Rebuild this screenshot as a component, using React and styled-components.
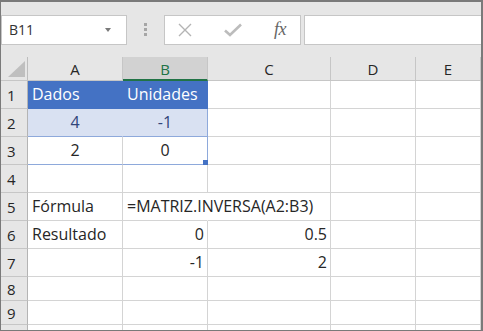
import React from 'react'
import styled, { createGlobalStyle } from 'styled-components'

const Global = createGlobalStyle`
    html, body { margin: 0; padding: 0; background: #fff; }
`

const Frame = styled.div`
    width: 483px;
    height: 331px;
    box-sizing: border-box;
    border-style: solid;
    border-color: #7a7a7a;
    border-width: 2px 2px 1px 1px;
    background: #e6e6e6;
    display: flex;
    flex-direction: column;
    overflow: hidden;
    font-family: "Open Sans", "Noto Sans", sans-serif;
    color: #262626;
`

const Toolbar = styled.div`
    height: 55px;
    flex-shrink: 0;
    display: flex;
    align-items: center;
`

const Box = styled.div`
    height: 30px;
    box-sizing: border-box;
    border: 1px solid #c6c6c6;
    background: #fff;
    display: flex;
    align-items: center;
`

const NameBox = styled(Box)`
    width: 126px;
    justify-content: space-between;
    padding: 0 15px 0 7px;
    font-size: 14px;
    color: #333;
`

const Caret = styled.span`
    width: 0;
    height: 0;
    border-left: 3.5px solid transparent;
    border-right: 3.5px solid transparent;
    border-top: 4px solid #7a7a7a;
`

const Grip = styled.div`
    width: 37px;
    display: flex;
    flex-direction: column;
    align-items: center;
    gap: 2px;
    & > span {
        width: 3px;
        height: 3px;
        background: #a6a6a6;
    }
`

const FxBox = styled(Box)`
    width: 137px;
    padding: 0 14px 0 13px;
    justify-content: space-between;
`

const Fx = styled.span`
    font-family: "Liberation Serif", serif;
    font-style: italic;
    font-size: 18px;
    color: #666;
    letter-spacing: -0.5px;
`

const FormulaInput = styled(Box)`
    flex: 1;
    margin-left: 3px;
    border-right: none;
`

const Grid = styled.div`
    flex: 1;
    display: grid;
    grid-template-columns: 27px 95px 85px 123px 85px 1fr;
    grid-template-rows: 24px repeat(7, 28px) repeat(3, 24px);
    background: #fff;
    overflow: hidden;
`

const Corner = styled.div`
    background: #e6e6e6;
    box-sizing: border-box;
    border-right: 1px solid #bdbdbd;
    border-bottom: 1px solid #c6c6c6;
    display: flex;
    align-items: flex-end;
    justify-content: flex-end;
    padding: 0 2px 3px 0;
`

const ColHead = styled.div`
    background: ${p => p.$active ? '#d2d2d2' : '#e6e6e6'};
    color: ${p => p.$active ? '#217346' : '#262626'};
    box-sizing: border-box;
    border-right: 1px solid #c6c6c6;
    border-bottom: ${p => p.$active ? '2px solid #217346' : '1px solid #c6c6c6'};
    font-size: 15px;
    display: flex;
    align-items: center;
    justify-content: center;
    padding-top: 1px;
`

const RowHead = styled.div`
    background: #e6e6e6;
    box-sizing: border-box;
    border-right: 1px solid #b4b4b4;
    border-bottom: 1px solid #c6c6c6;
    font-size: 15px;
    display: flex;
    align-items: center;
    padding-left: 6px;
`

const tones = {
    plain: { bg: 'transparent', right: '#d4d4d4', bottom: '#d4d4d4', color: '#262626' },
    head: { bg: '#4472c4', right: '#4472c4', bottom: '#4472c4', color: '#fff' },
    band: { bg: '#d9e1f2', right: '#d9e1f2', bottom: '#8ea9db', color: '#31457a' },
    body: { bg: '#fff', right: '#d4d4d4', bottom: '#8ea9db', color: '#262626' },
}

const Cell = styled.div`
    position: relative;
    box-sizing: border-box;
    background: ${p => tones[p.$tone].bg};
    color: ${p => tones[p.$tone].color};
    border-bottom: 1px solid ${p => tones[p.$tone].bottom};
    border-right: 1px solid ${p => p.$spill ? 'transparent' : p.$edge ? (p.$tone === 'head' ? '#4472c4' : '#8ea9db') : tones[p.$tone].right};
    font-size: 16px;
    line-height: ${p => p.$short ? '23px' : '27px'};
    white-space: nowrap;
    text-align: ${p => p.$align || 'left'};
    padding: ${p => p.$align === 'right' ? '0 3px 0 4px' : '0 4px 0 4px'};
    overflow: visible;
    z-index: ${p => p.$spill ? 1 : 0};
    ${p => p.$handle && `
        &::after {
            content: '';
            position: absolute;
            right: -1px;
            bottom: -1px;
            width: 5px;
            height: 5px;
            background: #4472c4;
        }
    `}
`

const columns = ['A', 'B', 'C', 'D', 'E']

const rows = [
    [{ t: 'Dados', tone: 'head' }, { t: 'Unidades', tone: 'head', edge: true }],
    [{ t: '4', tone: 'band', align: 'center' }, { t: '-1', tone: 'band', align: 'center', edge: true }],
    [{ t: '2', tone: 'body', align: 'center' }, { t: '0', tone: 'body', align: 'center', edge: true, handle: true }],
    [],
    [{ t: 'Fórmula' }, { t: '=MATRIZ.INVERSA(A2:B3)', spill: true }],
    [{ t: 'Resultado' }, { t: '0', align: 'right' }, { t: '0.5', align: 'right' }],
    [{}, { t: '-1', align: 'right' }, { t: '2', align: 'right' }],
    [],
    [],
    [],
]

export default function App() {
    return (
        <>
            <Global />
            <Frame>
                <Toolbar>
                    <NameBox>
                        <span>B11</span>
                        <Caret />
                    </NameBox>
                    <Grip><span /><span /><span /></Grip>
                    <FxBox>
                        <svg width="14" height="14" viewBox="0 0 14 14">
                            <path d="M1 1 L13 13 M13 1 L1 13" stroke="#b4b4b4" strokeWidth="1.4" fill="none" />
                        </svg>
                        <svg width="18" height="14" viewBox="0 0 18 14">
                            <path d="M1 7.5 L6 12 L17 1.5" stroke="#bcbcbc" strokeWidth="2.6" fill="none" />
                        </svg>
                        <Fx>fx</Fx>
                    </FxBox>
                    <FormulaInput />
                </Toolbar>
                <Grid>
                    <Corner>
                        <svg width="17" height="16" viewBox="0 0 17 16">
                            <path d="M0 16 L17 0 L17 16 Z" fill="#bfbfbf" />
                        </svg>
                    </Corner>
                    {columns.map(c => (
                        <ColHead key={c} $active={c === 'B'}>{c}</ColHead>
                    ))}
                    {rows.map((row, i) => (
                        <React.Fragment key={i}>
                            <RowHead>{i < 9 ? i + 1 : ''}</RowHead>
                            {columns.map((c, j) => {
                                const cell = row[j] || {}
                                return (
                                    <Cell
                                        key={c}
                                        $tone={cell.tone || 'plain'}
                                        $align={cell.align}
                                        $edge={cell.edge}
                                        $spill={cell.spill}
                                        $handle={cell.handle}
                                        $short={i >= 7}
                                    >
                                        {cell.t}
                                    </Cell>
                                )
                            })}
                        </React.Fragment>
                    ))}
                </Grid>
            </Frame>
        </>
    )
}
